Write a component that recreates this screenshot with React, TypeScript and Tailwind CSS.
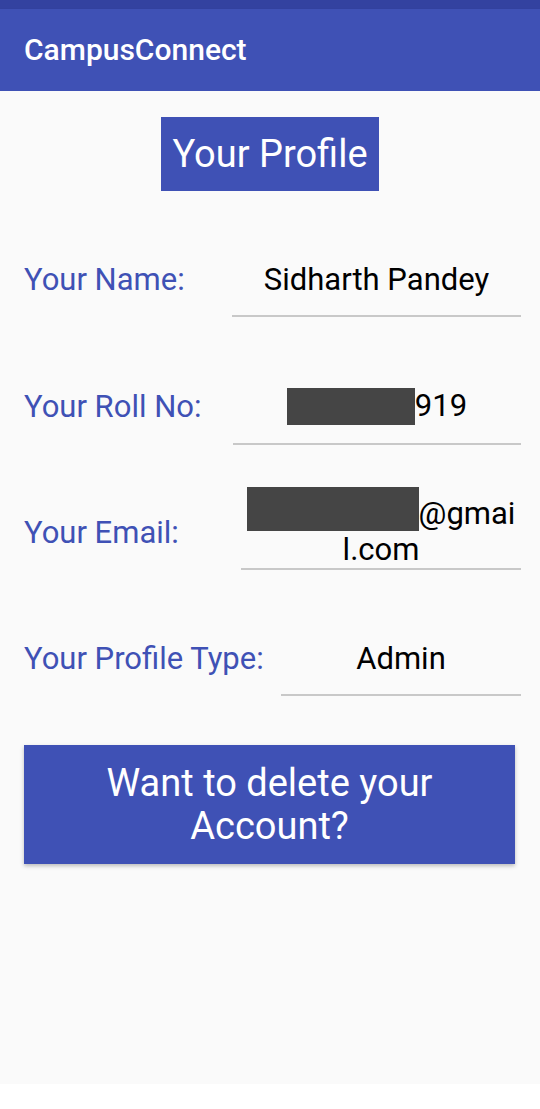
const font = { fontFamily: "Roboto, 'Noto Sans', sans-serif" };

function Redacted({ h, shift }: { h: string; shift: string }) {
  return <span className={`inline-block bg-[#454545] ${h} ${shift}`} />;
}

export default function App() {
  return (
    <div className="flex min-h-[1109px] w-[540px] flex-col bg-white" style={font}>
      <div className="h-[9px] bg-[#3342a0]" />
      <header className="flex h-[82px] items-center bg-[#3f51b5] px-6 shadow-[0_2px_3px_rgba(0,0,0,0.18)]">
        <h1 className="text-[30px] font-medium leading-none text-white">CampusConnect</h1>
      </header>

      <main className="flex h-[993px] flex-col bg-[#fafafa]">
        <div className="mt-[26px] flex justify-center">
          <div className="flex h-[74px] w-[218px] items-center justify-center bg-[#3f51b5] text-[38px] leading-none text-white">
            Your Profile
          </div>
        </div>

        {/* name */}
        <div className="mt-[51px] flex items-center pl-6 pr-[19px]">
          <span className="text-[31px] leading-[35px] text-[#3f51b5]">Your Name:</span>
          <div className="ml-auto w-[289px] border-b-2 border-[#c8c8c8] pb-[18px] pt-[20px] text-center text-[31px] leading-[35px] text-black">
            Sidharth Pandey
          </div>
        </div>

        {/* roll no */}
        <div className="mt-[51px] flex items-center pl-6 pr-[19px]">
          <span className="text-[31px] leading-[35px] text-[#3f51b5]">Your Roll No:</span>
          <div className="ml-auto w-[288px] border-b-2 border-[#c8c8c8] pb-[18px] pt-[20px] text-center text-[31px] leading-[35px] text-black">
            <Redacted h="h-[37px] w-[128px]" shift="align-[-9px] -mt-[4px]" />
            919
          </div>
        </div>

        {/* email */}
        <div className="mt-[49px] flex items-center pl-6 pr-[19px]">
          <span className="text-[31px] leading-[35px] text-[#3f51b5]">Your Email:</span>
          <div className="ml-auto w-[280px] border-b-2 border-[#c8c8c8] pb-0 pt-[2px] text-center text-[31px] leading-[36px] text-black">
            <span className="whitespace-nowrap">
              <Redacted h="h-[44px] w-[172px]" shift="align-[-7px] -mt-[10px]" />
              @gmai
            </span>
            <br />
            l.com
          </div>
        </div>

        {/* profile type */}
        <div className="mt-[51px] flex items-center pl-6 pr-[19px]">
          <span className="text-[31px] leading-[35px] text-[#3f51b5]">Your Profile Type:</span>
          <div className="ml-auto w-[240px] border-b-2 border-[#c8c8c8] pb-[18px] pt-[20px] text-center text-[31px] leading-[35px] text-black">
            Admin
          </div>
        </div>

        <div className="mt-[49px] px-6 pr-[25px]">
          <button className="flex h-[119px] w-full flex-col items-center justify-center bg-[#3f51b5] text-[38px] leading-[43px] text-white shadow-[0_2px_4px_rgba(0,0,0,0.25)]">
            <span>Want to delete your</span>
            <span>Account?</span>
          </button>
        </div>
      </main>
    </div>
  );
}
